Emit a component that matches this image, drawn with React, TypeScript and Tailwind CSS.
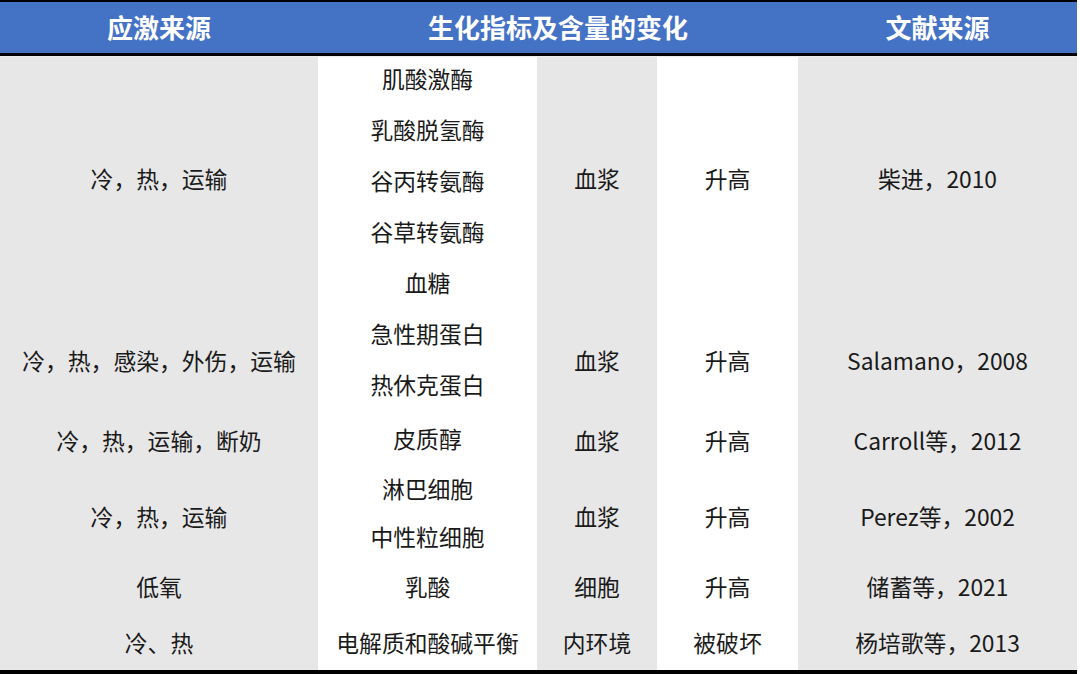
import React from "react";

type Row = {
  src: string;
  items: string[];
  place: string;
  change: string;
  ref: string;
  lineCls: string;
  cellCls: string;
};

const rows: Row[] = [
  { src: "冷，热，运输", items: ["肌酸激酶", "乳酸脱氢酶", "谷丙转氨酶", "谷草转氨酶", "血糖"], place: "血浆", change: "升高", ref: "柴进，2010", lineCls: "h-[51px] pb-[6px]", cellCls: "pb-[10px]" },
  { src: "冷，热，感染，外伤，运输", items: ["急性期蛋白", "热休克蛋白"], place: "血浆", change: "升高", ref: "Salamano，2008", lineCls: "h-[51px] pb-[6px]", cellCls: "pb-[3px]" },
  { src: "冷，热，运输，断奶", items: ["皮质醇"], place: "血浆", change: "升高", ref: "Carroll等，2012", lineCls: "h-[57px] pb-[6px]", cellCls: "pb-[2px]" },
  { src: "冷，热，运输", items: ["淋巴细胞", "中性粒细胞"], place: "血浆", change: "升高", ref: "Perez等，2002", lineCls: "h-[48px] pb-[11px]", cellCls: "pb-[3px]" },
  { src: "低氧", items: ["乳酸"], place: "细胞", change: "升高", ref: "储蓄等，2021", lineCls: "h-[51px] pb-[10px]", cellCls: "pb-[10px]" },
  { src: "冷、热", items: ["电解质和酸碱平衡"], place: "内环境", change: "被破坏", ref: "杨培歌等，2013", lineCls: "h-[52px] pb-[1px]", cellCls: "pb-[1px]" },
];

const font = { fontFamily: '"Noto Sans CJK SC", "Noto Sans", sans-serif' };

export default function App() {
  return (
    <div className="w-[1080px] h-[674px] bg-white overflow-hidden" style={font}>
      <div className="w-[1077px]">
        <div className="h-[56px] border-t-[2px] border-b-[3px] border-black bg-[#4472c4] flex text-white font-bold text-[26px] leading-none">
          <div className="w-[318px] flex items-center justify-center pb-[2px]">应激来源</div>
          <div className="w-[480px] flex items-center justify-center pb-[2px]">生化指标及含量的变化</div>
          <div className="flex-1 flex items-center justify-center pb-[2px]">文献来源</div>
        </div>
        <div className="h-[1px] bg-[#eeeeee]" />
        <div className="text-[22.8px] leading-none text-[#1a1a1a]">
          {rows.map((r, i) => (
            <div key={i} className="flex">
              <div className={`w-[318px] bg-[#e7e7e7] flex items-center justify-center ${r.cellCls}`}>{r.src}</div>
              <div className="w-[219px] bg-white flex flex-col">
                {r.items.map((it, j) => (
                  <div key={j} className={`flex items-center justify-center ${r.lineCls}`}>{it}</div>
                ))}
              </div>
              <div className={`w-[120px] bg-[#e7e7e7] flex items-center justify-center ${r.cellCls}`}>{r.place}</div>
              <div className={`w-[141px] bg-white flex items-center justify-center ${r.cellCls}`}>{r.change}</div>
              <div className={`flex-1 bg-[#e7e7e7] flex items-center justify-center ${r.cellCls}`}>{r.ref}</div>
            </div>
          ))}
        </div>
        <div className="h-[5px] bg-black" />
      </div>
    </div>
  );
}
